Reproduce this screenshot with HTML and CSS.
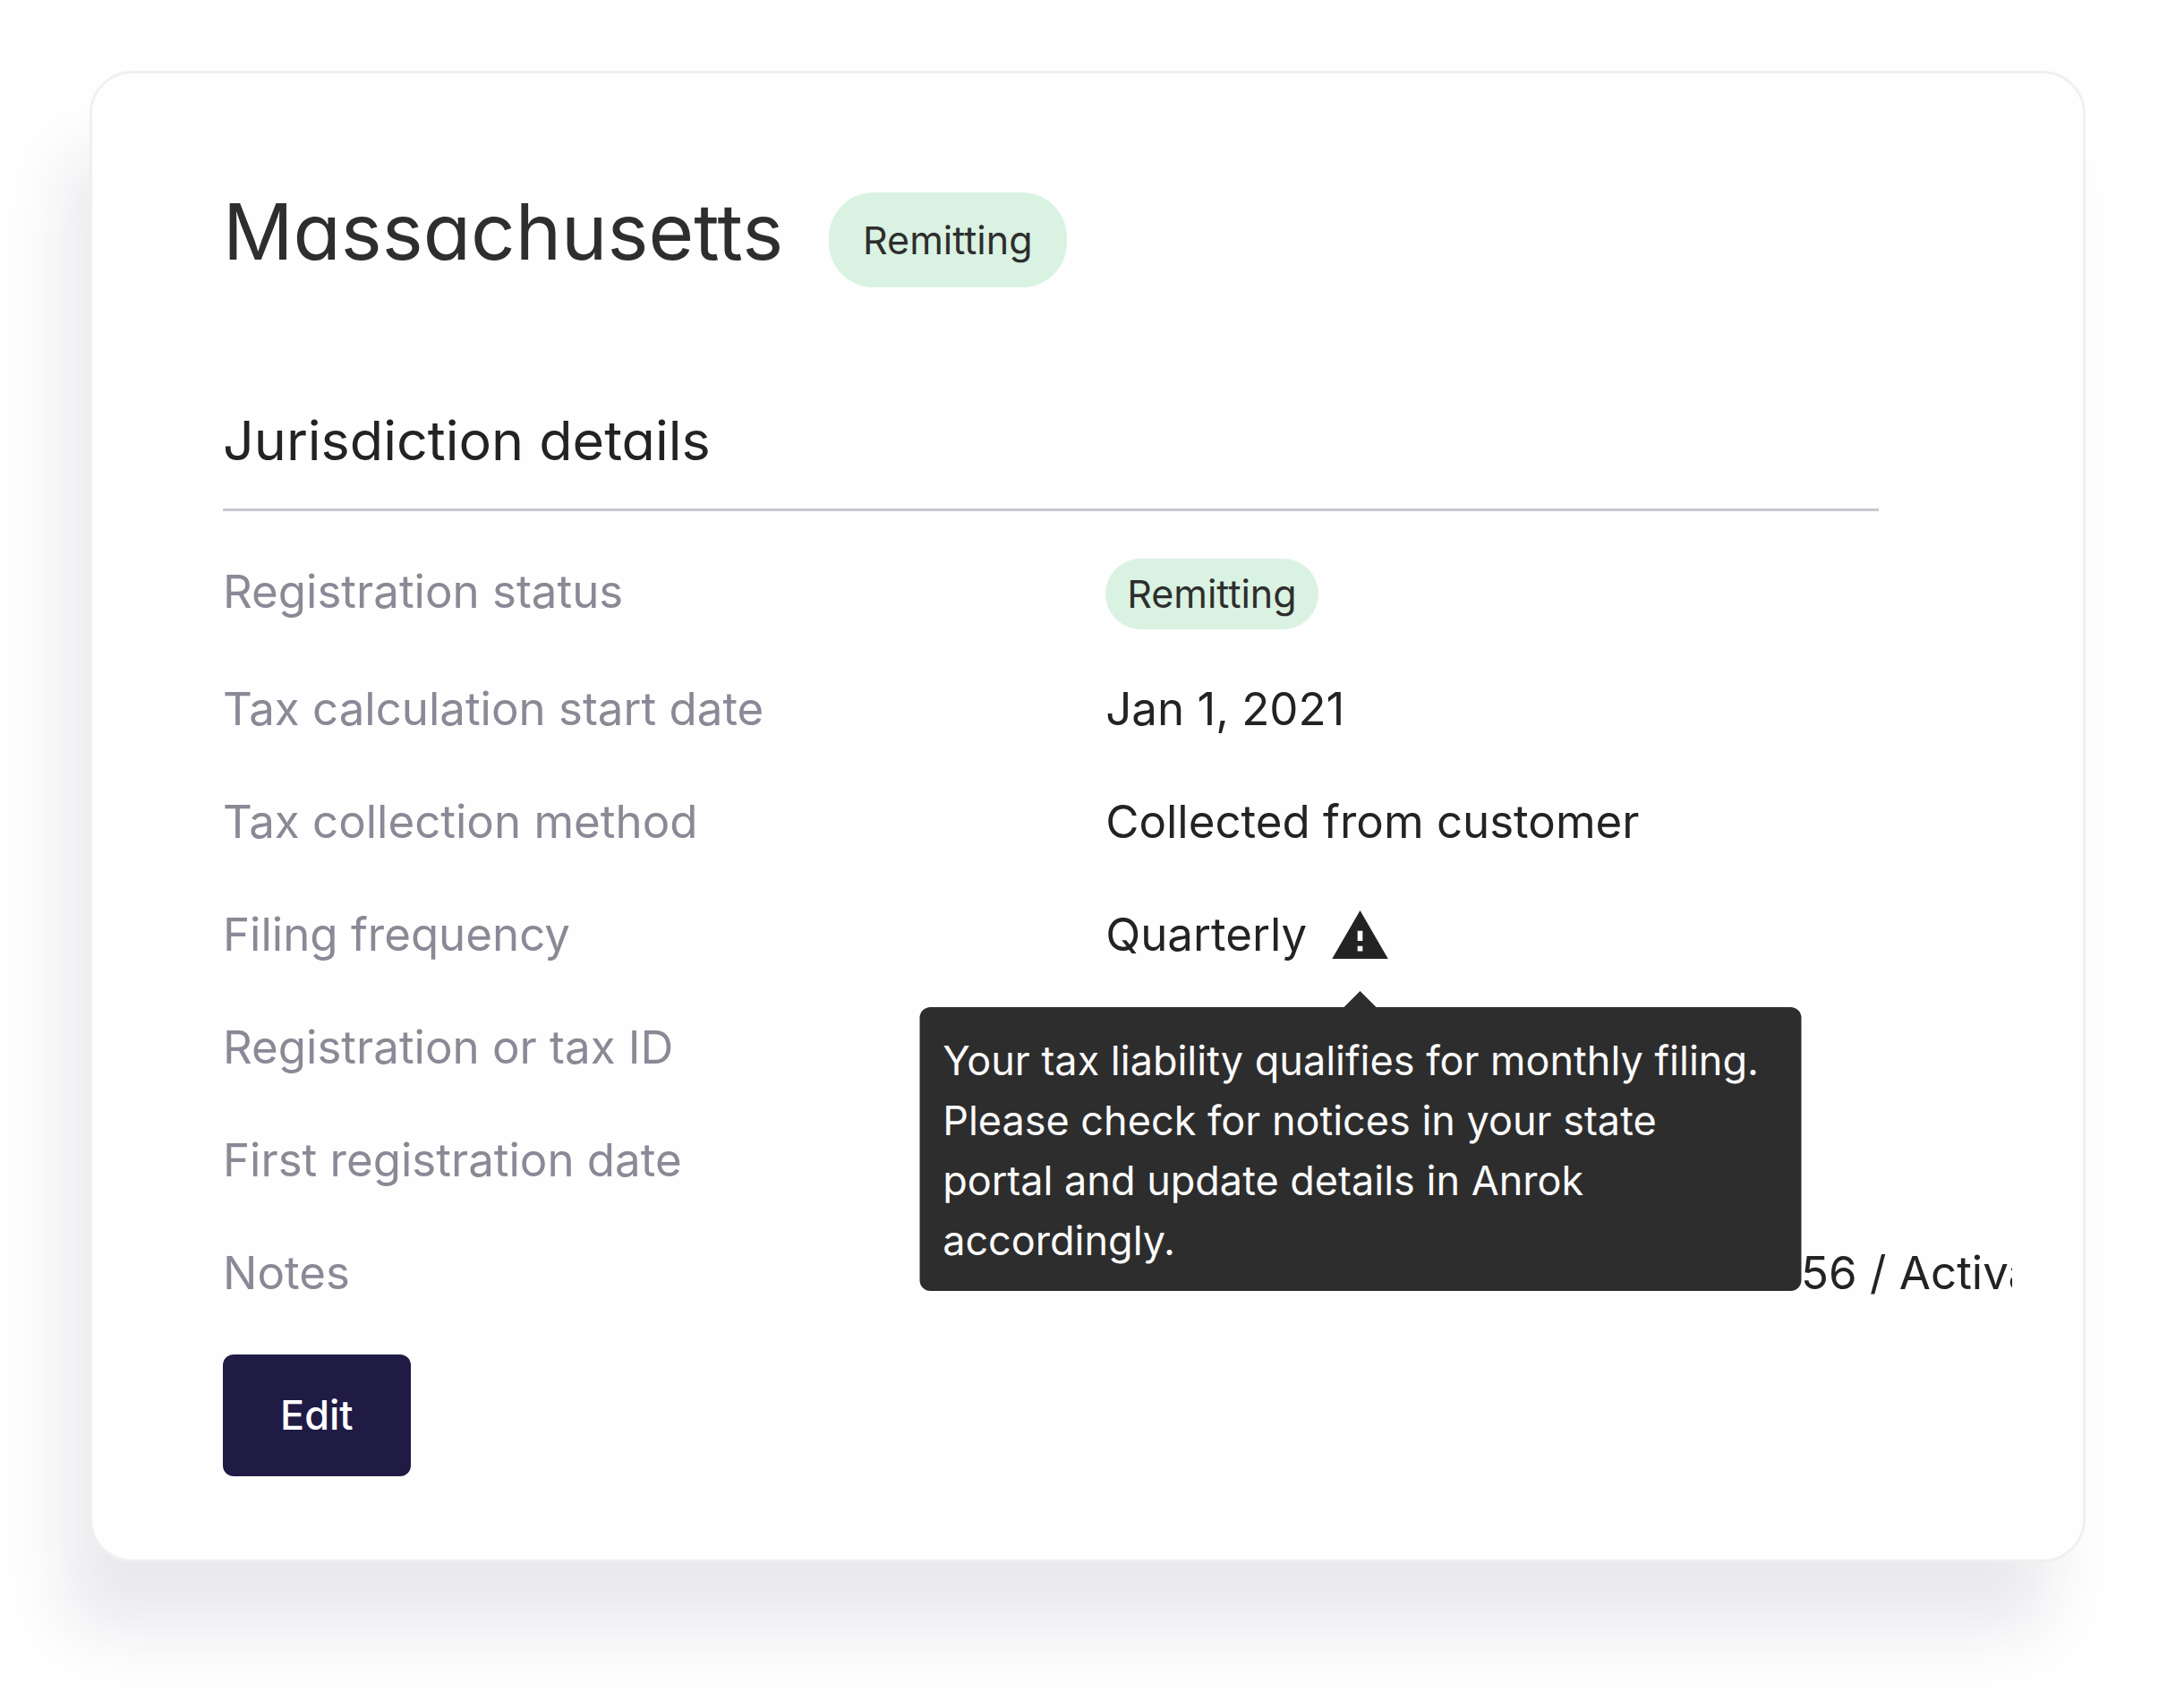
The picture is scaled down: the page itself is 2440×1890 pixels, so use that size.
FILE: index.html
```
<!DOCTYPE html>
<html lang="en">
<head>
<meta charset="utf-8">
<title>Massachusetts</title>
<link rel="stylesheet" href="styles.css">
</head>
<body>
<main class="card">
  <header class="card-header">
    <h1>Massachusetts</h1>
    <span class="pill pill-large">Remitting</span>
  </header>
  <h2>Jurisdiction details</h2>
  <dl class="details">
    <dt>Registration status</dt>
    <dd><span class="pill">Remitting</span></dd>
    <dt>Tax calculation start date</dt>
    <dd>Jan 1, 2021</dd>
    <dt>Tax collection method</dt>
    <dd>Collected from customer</dd>
    <dt>Filing frequency</dt>
    <dd class="frequency">
      Quarterly
      <span class="warning">
        <svg viewBox="1 2 22 19" role="img" aria-label="Warning" aria-describedby="filing-tip">
          <path d="M1 21h22L12 2 1 21zm12-3h-2v-2h2v2zm0-4h-2v-4h2v4z"/>
        </svg>
        <span class="tooltip" role="tooltip" id="filing-tip">Your tax liability qualifies for monthly filing. Please check for notices in your state portal and update details in Anrok accordingly.</span>
      </span>
    </dd>
    <dt>Registration or tax ID</dt>
    <dd></dd>
    <dt>First registration date</dt>
    <dd></dd>
    <dt>Notes</dt>
    <dd class="notes">456 / Activa</dd>
  </dl>
  <button type="button" class="edit">Edit</button>
</main>
</body>
</html>
```
FILE: styles.css
```
* {
	box-sizing: border-box;
}
body {
	margin: 0;
	padding: 79px 110px 146px 100px;
	background-color: #fefefe;
	color: #232323;
	font-family: Inter, "Liberation Sans", sans-serif;
	font-size: 51px;
	line-height: 75px;
}
h1, h2, dl, dd {
	margin: 0;
	font-weight: 400;
}
.card {
	padding: 133px 79px 93px 146px;
	border: 3px solid #f0f0f0;
	border-radius: 48px;
	background-color: #fefefe;
	box-shadow: -34px 84px 70px -8px rgba(31, 27, 68, 0.09);
}

/* title */
.card-header {
	display: flex;
	align-items: flex-start;
	gap: 51px;
	margin-bottom: 135px;
}
h1 {
	color: #2e2e2e;
	font-size: 87px;
	line-height: 88px;
}
h1, h2 {
	font-feature-settings: "cv11";
}
h2 {
	margin-right: 149px;
	padding-bottom: 40px;
	border-bottom: 3px solid #c9c8d0;
	font-size: 61px;
	line-height: 72px;
}
.pill {
	display: inline-block;
	padding: 0 24px;
	border-radius: 40px;
	background-color: #daf2e2;
	color: #2e2e2e;
	font-size: 43px;
	line-height: 79px;
}
.pill-large {
	padding: 0 38px;
	border-radius: 50px;
	line-height: 106px;
}

/* details list */
.details {
	display: grid;
	grid-template-columns: minmax(0, 37fr) minmax(0, 38fr);
	align-items: baseline;
	row-gap: 51px;
	margin-top: 52px;
	margin-bottom: 54px;
}
dt {
	color: #8a8996;
}
.frequency {
	display: flex;
	align-items: center;
	gap: 28px;
}
.notes {
	overflow: hidden;
	padding-left: 744px;
	white-space: nowrap;
}

/* warning and its tooltip */
.warning {
	position: relative;
	z-index: 1;
}
.warning svg {
	display: block;
	width: 63px;
	height: 54px;
	fill: #232323;
}
.tooltip {
	position: absolute;
	top: calc(100% + 54px);
	left: 50%;
	width: 985px;
	padding: 26px 32px 23px 26px;
	border-radius: 12px;
	background-color: #2d2d2d;
	color: #fafafa;
	font-size: 45px;
	line-height: 67px;
	transform: translateX(-50%);
}
.tooltip::before {
	content: "";
	position: absolute;
	bottom: 100%;
	left: 50%;
	margin-left: -18px;
	border: 18px solid transparent;
	border-top: 0;
	border-bottom-color: #2d2d2d;
}

.edit {
	display: block;
	padding: 36px 64px;
	border: 0;
	border-radius: 12px;
	background-color: #1f1b44;
	color: #fff;
	font-family: inherit;
	font-size: 45px;
	font-weight: 500;
	line-height: 64px;
}
```
